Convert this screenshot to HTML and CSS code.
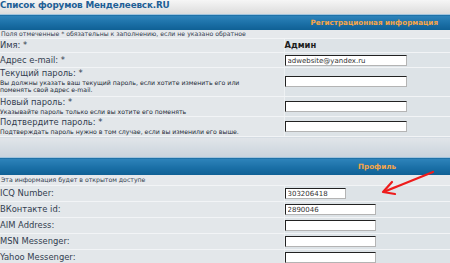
FILE: index.html
```html
<!DOCTYPE html>
<html lang="ru">
<head>
  <meta charset="UTF-8" />
  <title>Профиль</title>
  <link rel="stylesheet" href="styles.css">
</head>
<body>
  <div class="crumbs"><a href="#">Список форумов Менделеевск.RU</a></div>

  <table class="form">
    <colgroup><col class="c1" /><col class="c2" /></colgroup>
    <tr><th colspan="2" class="cat">Регистрационная информация</th></tr>
    <tr class="note"><td colspan="2">Поля отмеченные * обязательны к заполнению, если не указано обратное</td></tr>
    <tr class="r-name">
      <td class="lbl">Имя: *</td>
      <td class="val"><b>Админ</b></td>
    </tr>
    <tr class="r-mail">
      <td class="lbl">Адрес e-mail: *</td>
      <td class="val"><input class="box" type="text" value="adwebsite@yandex.ru" /></td>
    </tr>
    <tr class="r-cur">
      <td class="lbl">Текущий пароль: *<span class="desc">Вы должны указать ваш текущий пароль, если хотите изменить его или поменять свой адрес e-mail.</span></td>
      <td class="val"><input class="box" type="password" /></td>
    </tr>
    <tr class="r-new">
      <td class="lbl">Новый пароль: *<span class="desc">Указывайте пароль только если вы хотите его поменять</span></td>
      <td class="val"><input class="box" type="password" /></td>
    </tr>
    <tr class="r-conf">
      <td class="lbl">Подтвердите пароль: *<span class="desc">Подтверждать пароль нужно в том случае, если вы изменили его выше.</span></td>
      <td class="val"><input class="box" type="password" /></td>
    </tr>
    <tr class="spacer"><td colspan="2"></td></tr>
    <tr><th colspan="2" class="cat cat-mid">Профиль</th></tr>
    <tr class="note note2"><td colspan="2">Эта информация будет в открытом доступе</td></tr>
    <tr class="prow">
      <td class="lbl">ICQ Number:</td>
      <td class="val"><input class="box short" type="text" value="303206418" /></td>
    </tr>
    <tr class="prow">
      <td class="lbl">ВКонтакте id:</td>
      <td class="val"><input class="box mid" type="text" value="2890046" /></td>
    </tr>
    <tr class="prow">
      <td class="lbl">AIM Address:</td>
      <td class="val"><input class="box mid" type="text" /></td>
    </tr>
    <tr class="prow">
      <td class="lbl">MSN Messenger:</td>
      <td class="val"><input class="box mid" type="text" /></td>
    </tr>
    <tr class="prow">
      <td class="lbl">Yahoo Messenger:</td>
      <td class="val"><input class="box mid" type="text" /></td>
    </tr>
  </table>

  <!-- красная стрелка на поле ВКонтакте -->
  <svg class="arrow" width="60" height="30" viewBox="0 0 60 30">
    <line x1="55" y1="2" x2="8" y2="21" stroke="#ee1c1c" stroke-width="2.2" stroke-linecap="round" />
    <polyline points="14,12 5,22 17,24" fill="none" stroke="#ee1c1c" stroke-width="2.2" stroke-linecap="round" stroke-linejoin="round" />
  </svg>
</body>
</html>
```

FILE: styles.css
```css
body {
  margin: 0;
  width: 450px;
  height: 263px;
  overflow: hidden;
  position: relative;
  font-family: "DejaVu Sans", Verdana, sans-serif;
  font-size: 8.4px;
  line-height: 11px;
  color: #323d4f;
  background: #e1e5e9;
}
.crumbs {
  height: 14px;
  background: linear-gradient(#f6f6f6, #dcdcdc);
  font-size: 8.8px;
  font-weight: bold;
  line-height: 11px;
  letter-spacing: -0.15px;
}
.crumbs a {
  color: #1e5f96;
  text-decoration: none;
}
.form {
  width: 450px;
  border-collapse: collapse;
  table-layout: fixed;
}
.c1 { width: 284px; }
.c2 { width: 166px; }
.form td {
  padding: 0;
  border-bottom: 1px solid #f2f4f6;
  vertical-align: top;
}
.cat {
  height: 15px;
  padding: 0 12px 0 0;
  border-top: 1px solid #9fc3dd;
  background: linear-gradient(#2f84bb, #1a6fa6 55%, #0f5f93);
  color: #f5a548;
  font-size: 7.2px;
  font-weight: bold;
  text-align: right;
  line-height: 15px;
}
.cat-mid {
  height: 16px;
  line-height: 17px;
  text-align: left;
  padding-left: 358px;
}
.note td {
  height: 8px;
  padding-left: 1px;
  font-size: 6.2px;
  line-height: 8px;
  background: #e6e9ec;
}
.note2 td {
  height: 10px;
  line-height: 10px;
}
.lbl {
  padding-left: 1px;
  background: #e3e7ea;
  border-right: 1px solid #eef1f3;
}
.val {
  padding-left: 3px;
  background: #dde3e7;
}
.desc {
  display: block;
  max-width: 266px;
  font-size: 6.2px;
  line-height: 7px;
  color: #222a36;
}
.r-name td { height: 12px; padding-top: 1px; }
.r-name b { color: #1d1d1d; }
.r-mail td { height: 12px; padding-top: 2px; }
.r-cur td { height: 28px; }
.r-cur .val { padding-top: 8px; height: 20px; }
.r-new td { height: 19px; }
.r-new .val { padding-top: 4px; height: 15px; }
.r-conf td { height: 19px; }
.r-conf .val { padding-top: 4px; height: 15px; }
.spacer td {
  height: 20px;
  border-bottom: 0;
  background: linear-gradient(#e1e5e9, #c9d3dc);
}
.prow td { height: 13px; padding-top: 2px; }
.box {
  box-sizing: border-box;
  display: block;
  width: 122px;
  height: 11px;
  margin: 0;
  padding: 0 2px;
  border-style: solid;
  border-color: #222 #b4b4b4 #b4b4b4 #222;
  border-width: 1.5px 1px 1px 1.5px;
  background: #fff;
  font-family: "DejaVu Sans", Verdana, sans-serif;
  font-size: 7px;
  line-height: 9px;
  color: #333;
}
.box.short { width: 61px; }
.box.mid { width: 91px; }
.arrow {
  position: absolute;
  left: 378px;
  top: 170px;
}
```
